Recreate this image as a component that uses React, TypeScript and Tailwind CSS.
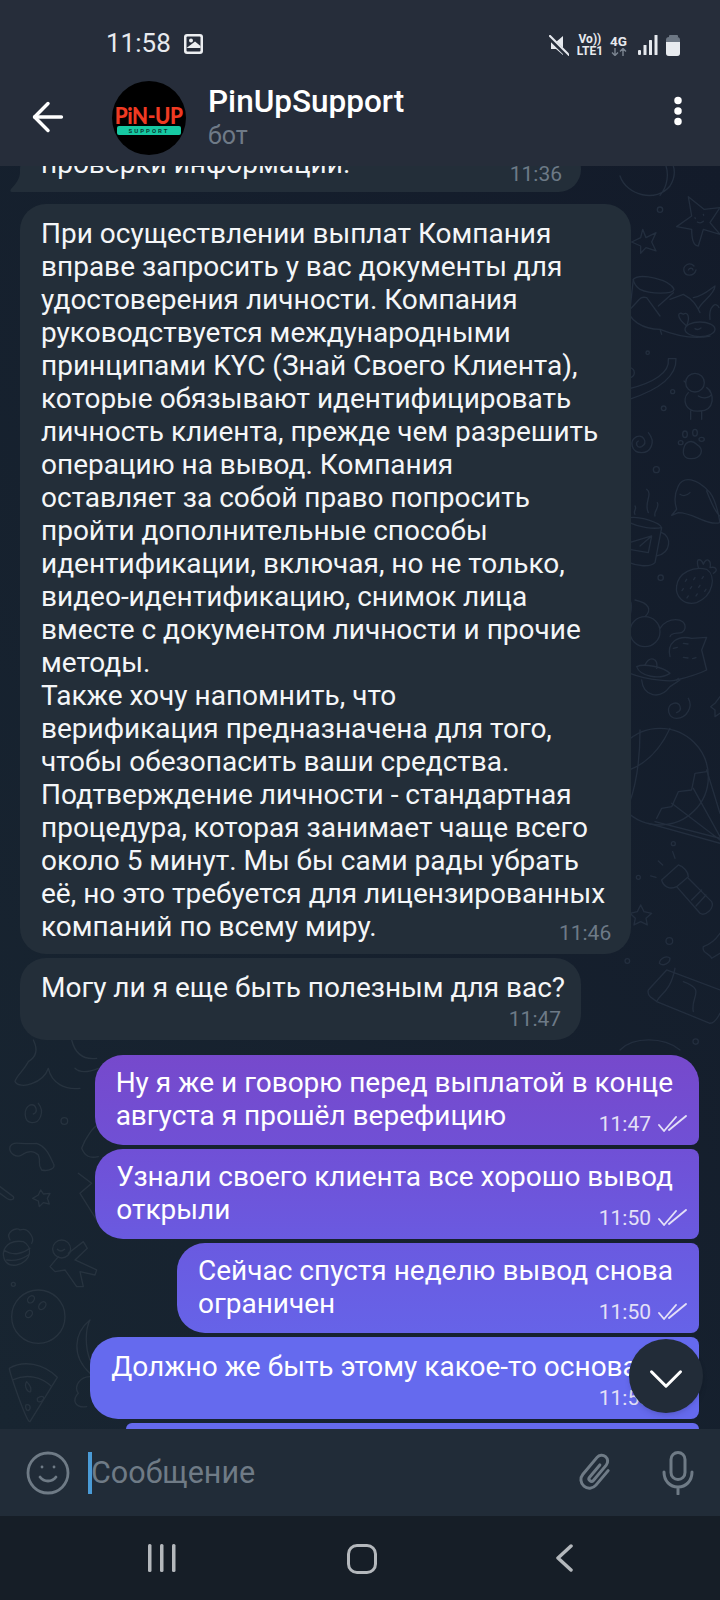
import { ArrowLeft, ChevronDown, EllipsisVertical, Smile } from "lucide-react";

type BubbleProps = {
  lines: string[];
  time: string;
  own?: boolean;
  timeBelow?: boolean;
  className: string;
};

const LONG_TEXT = [
  "При осуществлении выплат Компания",
  "вправе запросить у вас документы для",
  "удостоверения личности. Компания",
  "руководствуется международными",
  "принципами KYC (Знай Своего Клиента),",
  "которые обязывают идентифицировать",
  "личность клиента, прежде чем разрешить",
  "операцию на вывод. Компания",
  "оставляет за собой право попросить",
  "пройти дополнительные способы",
  "идентификации, включая, но не только,",
  "видео-идентификацию, снимок лица",
  "вместе с документом личности и прочие",
  "методы.",
  "Также хочу напомнить, что",
  "верификация предназначена для того,",
  "чтобы обезопасить ваши средства.",
  "Подтверждение личности - стандартная",
  "процедура, которая занимает чаще всего",
  "около 5 минут. Мы бы сами рады убрать",
  "её, но это требуется для лицензированных",
  "компаний по всему миру.",
];

function Checks() {
  return (
    <svg width="30" height="18" viewBox="0 0 30 18" fill="none" stroke="#e4e0f7" strokeWidth="1.9" strokeLinecap="round" strokeLinejoin="round">
      <path d="M1 10l5 6L18 2" />
      <path d="M11 15L28 1" />
    </svg>
  );
}

function Bubble({ lines, time, own, timeBelow, className }: BubbleProps) {
  return (
    <div
      className={`relative pl-[21px] text-[28px] ${timeBelow ? "pb-[36px] pt-[13px]" : own ? "pb-[13px] pt-[12px]" : "pb-[11px] pt-[13px]"} ${
        own ? "self-end text-white" : "self-start text-[#f4f6f8]"
      } ${own && !timeBelow ? "leading-[32.5px]" : "leading-[33px]"} ${className}`}
    >
      {lines.map((line) => (
        <div key={line} className="whitespace-nowrap">
          {line}
        </div>
      ))}
      <div
        className={`absolute bottom-[8px] flex items-center gap-[7px] text-[21px] leading-[26px] ${
          own ? "right-[11px] text-[#e4e0f7]" : "right-[20px] text-[#6d7a87]"
        }`}
      >
        {time}
        {own && <Checks />}
      </div>
    </div>
  );
}

// the faint line drawings of the chat wallpaper, in the coordinates of 3x crops of each strip
function Wallpaper() {
  return (
    <svg
      className="absolute inset-0 h-full w-full"
      viewBox="0 166 720 1263"
      fill="none"
      stroke="#232e3e"
      strokeLinecap="round"
      strokeLinejoin="round"
    >
      <g transform="translate(620 166) scale(0.3333)" strokeWidth="4">
        <path d="M0 30C20 90 110 110 150 60C165 35 165 15 160 0M120 88C145 60 145 20 138 0" />
        <circle cx="120" cy="131" r="8" />
        <path d="M170 182L215 150L205 92L252 130L300 125L270 170L300 205L250 190L235 240Q215 240 215 190Z" />
        <path d="M225 155l1 3M250 145l1 3M232 168q10 6 18-2" />
        <path d="M68 190L78 215L108 200L95 228L108 255L78 245L62 262L62 240L35 228L62 215Z" />
        <path d="M222 300C208 285 188 300 192 315C196 332 222 332 228 312M205 312c4-8 14-6 14 0" />
        <path d="M40 340C60 320 150 340 162 370C160 385 90 385 60 370C50 365 40 350 40 340Z" />
        <path d="M40 340L30 430M160 380L115 420M30 430C60 400 60 390 80 395L120 450M30 430C20 460 70 490 120 490L125 505" />
        <path d="M120 490C170 510 220 520 270 510M150 400L190 385C220 400 230 420 240 440M220 395C250 390 270 370 285 360C285 385 240 410 235 430" />
        <ellipse cx="240" cy="490" rx="45" ry="22" />
        <path d="M200 480C165 450 175 435 190 445C205 435 210 455 200 480M270 460C265 420 290 405 297 425M225 488q8 6 18-2" />
        <path d="M28 605a15 15 0 0 1 0 30M145 578L168 578C170 630 120 670 28 700M145 580C150 620 100 650 28 668" />
        <circle cx="83" cy="560" r="5" />
        <circle cx="158" cy="677" r="6" />
        <circle cx="131" cy="727" r="7" />
        <circle cx="225" cy="650" r="28" />
        <path d="M205 680C185 700 195 740 240 735C285 735 285 680 260 665M197 650L192 645M212 735V760M245 735V760M235 690C250 700 270 695 275 685" />
        <path d="M85 800C110 830 90 860 65 860C35 860 25 825 50 812C70 805 85 830 65 842C50 848 45 830 55 825" />
        <path d="M190 860C190 825 215 820 230 835C255 850 245 880 210 878C200 878 190 870 190 860Z" />
        <ellipse cx="182" cy="830" rx="7" ry="6" />
        <ellipse cx="195" cy="805" rx="7" ry="10" />
        <ellipse cx="225" cy="800" rx="7" ry="10" />
        <ellipse cx="245" cy="820" rx="8" ry="6" />
        <circle cx="109" cy="911" r="9" />
        <path d="M175 960C190 930 230 935 270 980C285 1000 295 1040 300 1070C260 1080 220 1040 175 1040L155 1048L170 1030C160 1000 165 980 175 960ZM180 985Q195 995 210 980M260 975C270 1000 285 1040 300 1050" />
        <path d="M80 970C100 985 70 1010 85 1040M112 1010C120 1025 100 1035 105 1050M45 1020C52 1030 38 1035 45 1045" />
        <path d="M28 1055C60 1050 120 1070 125 1085L105 1190C90 1205 50 1200 28 1190M28 1070C60 1085 100 1090 125 1085M125 1100C155 1110 155 1160 110 1170M28 1130L95 1110L85 1160L28 1150M95 1110L60 1140" />
        <circle cx="122" cy="1235" r="8" />
        <path d="M170 1260C175 1220 220 1200 260 1210C290 1230 280 1290 230 1310C190 1320 165 1290 170 1260Z" />
        <path d="M235 1205C225 1170 245 1180 250 1195C260 1170 275 1185 270 1205C290 1200 295 1215 280 1222" />
        <path d="M200 1240l-4 6M225 1235l-4 6M250 1232l-4 6M190 1268l-4 6M215 1262l-4 6M240 1258l-4 6M205 1290l-4 6M232 1284l-4 6M258 1270l-4 6" />
      </g>
      <g transform="translate(620 600) scale(0.3333)" strokeWidth="4">
        <circle cx="75" cy="95" r="45" />
        <path d="M45 0C90 10 95 30 75 50M30 0C40 20 30 40 28 60M120 85C140 50 200 50 195 85C190 110 155 90 150 110" />
        <path d="M150 170C140 130 170 105 215 115L260 112L245 150L260 210C230 225 190 235 170 240" />
        <path d="M160 145l12-3M190 130l14 2M190 172l14 2M218 176l10-3" />
        <path d="M30 220C80 240 170 250 175 235M65 240C70 290 120 300 150 260L180 240M50 200C70 190 130 200 150 220C120 240 60 230 50 200ZM75 195C90 165 115 175 110 205" />
        <path d="M205 295C220 320 200 355 170 355C145 355 135 320 160 310C180 305 190 330 170 338" />
        <path d="M300 290L285 310L272 320L285 330L285 350L300 340" />
        <circle cx="120" cy="530" r="145" />
        <path d="M60 390C60 470 50 550 28 610M150 385C120 450 80 490 28 510" />
        <path d="M110 655L125 625L155 620L175 575L215 570L225 520L260 515" />
        <path d="M155 610L300 720M220 565L300 710M260 510L300 640M105 665L300 715M85 670L300 730" />
        <circle cx="160" cy="731" r="6" />
        <path d="M165 775L158 755M128 795L115 783M108 832L92 828" />
        <circle cx="55" cy="832" r="6" />
        <path d="M125 840L175 795C190 800 205 815 205 830L170 860C150 870 130 860 125 840Z" />
        <path d="M170 860L240 940C255 950 285 925 275 905L205 835M215 900L245 870M228 918L258 885" />
        <path d="M62 915L72 935L95 940L78 955L82 975L62 965L42 975L46 955L30 940L52 935Z" />
        <circle cx="148" cy="1023" r="10" />
        <circle cx="22" cy="1083" r="7" />
        <path d="M118 1090C120 1075 140 1065 150 1075C150 1090 130 1100 118 1090Z" />
        <path d="M85 1170L140 1110L300 1170M85 1170C80 1190 100 1195 110 1205L270 1270C285 1270 295 1250 300 1240M110 1205C120 1180 150 1180 165 1105M220 1235C210 1190 260 1170 190 1145" />
        <circle cx="227" cy="1325" r="8" />
        <path d="M0 1350C40 1310 130 1310 180 1350" />
        <path d="M300 1000C285 1020 275 1030 250 1040C245 1060 270 1060 275 1075L300 1060" />
      </g>
      <g transform="translate(0 1040) scale(0.3333)" stroke="#27333f" strokeWidth="4">
        <path d="M45 125C50 105 70 95 85 65C110 50 115 30 100 0M45 125C60 150 130 130 145 85M145 85C155 130 195 150 240 145M215 0C225 40 250 60 290 55M225 85C240 100 270 95 295 85" />
        <path d="M115 190C135 215 120 250 95 248C70 245 70 205 90 195C110 190 115 220 100 222" />
        <circle cx="193" cy="243" r="10" />
        <path d="M30 320C40 300 60 315 110 310C140 320 150 350 160 370C170 385 145 395 125 390C110 370 125 370 115 345C100 330 80 335 65 345C50 355 25 340 30 320Z" />
        <path d="M0 440L40 470C45 480 30 482 20 475L0 460" />
        <path d="M122 450L130 462L150 460L142 475L148 492L130 488L118 500L115 483L98 475L115 465Z" />
        <path d="M245 325C255 295 280 260 295 255M245 325C255 350 270 355 295 350" />
        <path d="M235 400L275 430L240 460L290 540" />
        <path d="M10 640C15 610 40 600 70 605C100 620 95 665 50 675C20 680 10 660 10 640ZM30 600C15 575 50 560 60 570C85 560 105 595 95 610M12 630C40 650 70 640 90 625M20 660C50 665 70 655 85 645" />
        <circle cx="185" cy="627" r="27" />
        <path d="M205 640L250 605L262 625L225 660L290 690L285 705L240 695L250 740L230 740L195 690L165 695L150 680L175 650M172 628q10 10 22 0" />
        <circle cx="40" cy="733" r="6" />
        <circle cx="115" cy="830" r="80" />
        <ellipse cx="93" cy="778" rx="9" ry="12" transform="rotate(40 93 778)" />
        <ellipse cx="127" cy="797" rx="9" ry="13" transform="rotate(40 127 797)" />
        <ellipse cx="87" cy="822" rx="9" ry="12" transform="rotate(40 87 822)" />
        <path d="M28 985C70 960 130 970 172 1012L90 1145C80 1150 30 1000 28 985ZM38 1020C80 1000 125 1010 155 1040" />
        <path d="M80 1025C70 1040 85 1060 92 1055C95 1045 90 1035 80 1025ZM112 1075C125 1065 135 1070 130 1078C125 1088 110 1090 112 1075ZM78 1095C90 1090 95 1105 85 1112C78 1112 75 1100 78 1095Z" />
        <path d="M270 840C220 880 215 950 270 1000M270 840C255 870 255 920 270 960" />
        <path d="M270 1010C240 1010 220 1040 235 1060C215 1080 225 1105 260 1100" />
      </g>
    </svg>
  );
}

function GalleryIcon() {
  return (
    <svg width="19" height="20" viewBox="0 0 19 20">
      <rect width="19" height="20" rx="3" fill="#eceef1" />
      <rect x="2.5" y="2.5" width="14" height="15" rx="1" fill="#262d3a" />
      <circle cx="7" cy="6.5" r="2" fill="#eceef1" />
      <path d="M2.5 14L11 7.5l5.5 4.5V14z" fill="#eceef1" />
    </svg>
  );
}

function MuteIcon() {
  return (
    <svg width="20" height="21" viewBox="0 0 20 21">
      <path d="M2 7h5l7-6v19l-7-6H2z" fill="#e6e9ee" />
      <path d="M0 2l19 19" stroke="#262d3a" strokeWidth="4.5" />
      <path d="M1 1l19 19" stroke="#e6e9ee" strokeWidth="2.2" strokeLinecap="round" />
    </svg>
  );
}

function TransferArrows() {
  return (
    <svg width="16" height="8" viewBox="0 0 16 8" fill="none" stroke="#7c8591" strokeWidth="1.4">
      <path d="M4 0v7.5M1 4.5l3 3 3-3M12 8V.5M9 3.5l3-3 3 3" />
    </svg>
  );
}

function SignalIcon() {
  return (
    <svg width="20" height="20" viewBox="0 0 20 20" fill="#e6e9ee">
      <rect x="0" y="15" width="3" height="5" rx="1" />
      <rect x="5.5" y="10" width="3" height="10" rx="0.5" />
      <rect x="11" y="5" width="3" height="15" rx="0.5" />
      <rect x="16.5" y="0" width="3" height="20" rx="0.5" />
    </svg>
  );
}

function BatteryIcon() {
  return (
    <div className="flex flex-col items-center">
      <div className="h-[2px] w-[9px] rounded-t-[1px] bg-[#6d7784]" />
      <div className="flex h-[19px] w-[14px] flex-col overflow-hidden rounded-[3px] bg-[#6d7784]">
        <div className="mt-auto h-[14px] bg-[#e8ebef]" />
      </div>
    </div>
  );
}

function ClipIcon() {
  return (
    <svg width="44" height="44" viewBox="-22 -22 44 44" fill="none" stroke="#6f7b86" strokeWidth="3" strokeLinecap="round" strokeLinejoin="round">
      <path transform="rotate(40)" d="M7-9V10a8.5 8.5 0 0 1-17 0V-12a6 6 0 0 1 12 0V8a2.5 2.5 0 0 1-5 0V-8" />
    </svg>
  );
}

function MicIcon() {
  return (
    <svg width="32" height="44" viewBox="0 0 32 44" fill="none" stroke="#6f7b86" strokeWidth="3" strokeLinecap="round">
      <rect x="9" y="1.5" width="14" height="27" rx="7" />
      <path d="M2 21c0 9 6 15 14 15s14-6 14-15M16 36v7" />
    </svg>
  );
}

export default function App() {
  return (
    <div className="flex h-[1600px] w-[720px] flex-col overflow-hidden bg-[#131c28] font-['Roboto',sans-serif]">
      <header className="z-10 h-[166px] shrink-0 bg-[#262d3a]">
        <div className="flex h-[68px] items-start pl-[106px] pr-[40px] pt-[29px] text-[#e8eaee]">
          <span className="text-[26px] leading-[28px]">11:58</span>
          <div className="ml-[13px] mt-[5px]">
            <GalleryIcon />
          </div>
          <div className="ml-auto flex items-center pt-[4px]">
            <MuteIcon />
            <div className="ml-[8px] flex flex-col items-center text-[12px] font-bold leading-[12px]">
              <span>Vo))</span>
              <span>LTE1</span>
            </div>
            <div className="ml-[7px] flex flex-col items-center text-[13.5px] font-bold leading-[14px]">
              <span>4G</span>
              <TransferArrows />
            </div>
            <div className="ml-[11px]">
              <SignalIcon />
            </div>
            <div className="ml-[8px]">
              <BatteryIcon />
            </div>
          </div>
        </div>
        <div className="flex h-[98px] items-start">
          <ArrowLeft className="ml-[25px] mt-[26px] h-[46px] w-[46px] text-white" strokeWidth={1.8} />
          <div className="ml-[41px] mt-[13px] flex h-[74px] w-[74px] shrink-0 flex-col items-center justify-center rounded-full bg-black">
            <span className="mt-[3px] scale-x-90 whitespace-nowrap font-['Lato',sans-serif] text-[23px] font-black leading-[21px] tracking-[-0.5px] text-[#ef3a22]">
              PiN-UP
            </span>
            <span className="w-[64px] rounded-[2px] bg-[#17c9a3] text-center text-[6px] font-bold leading-[9px] tracking-[2px] text-[#0a3a34]">
              SUPPORT
            </span>
          </div>
          <div className="ml-[22px] mt-[16px]">
            <div className="text-[31.5px] font-medium leading-[36px] text-white">PinUpSupport</div>
            <div className="mt-[1px] text-[25px] leading-[30px] text-[#6f7a87]">бот</div>
          </div>
          <EllipsisVertical className="ml-auto mr-[24px] mt-[25px] h-[36px] w-[36px] fill-white text-white" strokeWidth={3} />
        </div>
      </header>

      <main className="relative min-h-0 flex-1 overflow-hidden bg-gradient-to-bl from-[#131b2a] to-[#182531]">
        <Wallpaper />
        <div className="absolute inset-x-0 bottom-0 flex flex-col pl-[20px] pr-[21px]">
          <div className="relative mb-[12px] w-[561px] self-start rounded-[26px] rounded-bl-none bg-[#232e39] pb-[12px] pl-[21px] text-[28px] leading-[33px] text-[#f4f6f8]">
            <div>проверки информации.</div>
            <div className="absolute bottom-[5px] right-[19px] text-[21px] leading-[26px] text-[#6d7a87]">11:36</div>
            <svg className="absolute bottom-0 -left-[10px]" width="11" height="20" viewBox="0 0 11 20" fill="#232e39">
              <path d="M11 0v20H2C0 20 0 18 1 17 6 12 10 6 10 0z" />
            </svg>
          </div>
          <Bubble lines={LONG_TEXT} time="11:46" className="rounded-[26px] bg-[#232e39] pr-[26px]" />
          <div className="h-[4px]" />
          <Bubble
            lines={["Могу ли я еще быть полезным для вас?"]}
            time="11:47"
            timeBelow
            className="rounded-[26px] bg-[#232e39] pr-[16px]"
          />
          <div className="h-[15px]" />
          <Bubble
            own
            className="rounded-l-[28px] rounded-tr-[28px] rounded-br-[8px] bg-gradient-to-b from-[#7649cc] to-[#7050d5] pr-[26px]"
            lines={["Ну я же и говорю перед выплатой в конце", "августа я прошёл верефицию"]}
            time="11:47"
          />
          <div className="h-[4px]" />
          <Bubble
            own
            className="rounded-l-[28px] rounded-r-[8px] bg-gradient-to-b from-[#7050d6] to-[#6a5ae0] pr-[26px]"
            lines={["Узнали своего клиента все хорошо вывод", "открыли"]}
            time="11:50"
          />
          <div className="h-[4px]" />
          <Bubble
            own
            className="rounded-l-[28px] rounded-r-[8px] bg-gradient-to-b from-[#6a5ae0] to-[#6663e8] pr-[26px]"
            lines={["Сейчас спустя неделю вывод снова", "ограничен"]}
            time="11:50"
          />
          <div className="h-[4px]" />
          <Bubble
            own
            className="rounded-l-[28px] rounded-r-[8px] bg-[#656aee] pr-[14px]"
            lines={["Должно же быть этому какое-то основание"]}
            time="11:50"
            timeBelow
          />
          <div className="mt-[4px] h-[6px] w-[573px] self-end rounded-t-[20px] bg-[#656aee]" />
        </div>
        <button
          type="button"
          className="absolute bottom-[16px] right-[17px] flex h-[74px] w-[74px] items-center justify-center rounded-full bg-[#222c38] pt-[6px] text-white shadow-md"
        >
          <ChevronDown className="h-[58px] w-[58px]" strokeWidth={1.25} />
        </button>
      </main>

      <div className="z-10 flex h-[87px] shrink-0 items-center bg-[#212c38] text-[#6f7b86]">
        <Smile className="ml-[24px] h-[48px] w-[48px]" strokeWidth={1.4} />
        <div className="ml-[16px] h-[42px] w-[4px] bg-[#4a9bd6]" />
        <span className="-ml-[1px] text-[30.5px] leading-[42px]">Сообщение</span>
        <div className="ml-auto">
          <ClipIcon />
        </div>
        <div className="ml-[43px] mr-[26px]">
          <MicIcon />
        </div>
      </div>

      <nav className="flex h-[84px] shrink-0 items-start bg-[#161e27] pt-[28px] text-[#b4b8bc]">
        <svg className="ml-[148px]" width="28" height="28" viewBox="0 0 28 28" fill="currentColor">
          <rect x="0" y="0" width="3.5" height="28" rx="1.5" />
          <rect x="12" y="0" width="3.5" height="28" rx="1.5" />
          <rect x="24" y="0" width="3.5" height="28" rx="1.5" />
        </svg>
        <div className="ml-[171px] h-[30px] w-[30px] rounded-[10px] border-[3.5px] border-[#b4b8bc]" />
        <svg className="ml-[178px]" width="18" height="28" viewBox="0 0 18 28" fill="none" stroke="currentColor" strokeWidth="3.5" strokeLinecap="round" strokeLinejoin="round">
          <path d="M16 2L3 14l13 12" />
        </svg>
      </nav>
    </div>
  );
}
